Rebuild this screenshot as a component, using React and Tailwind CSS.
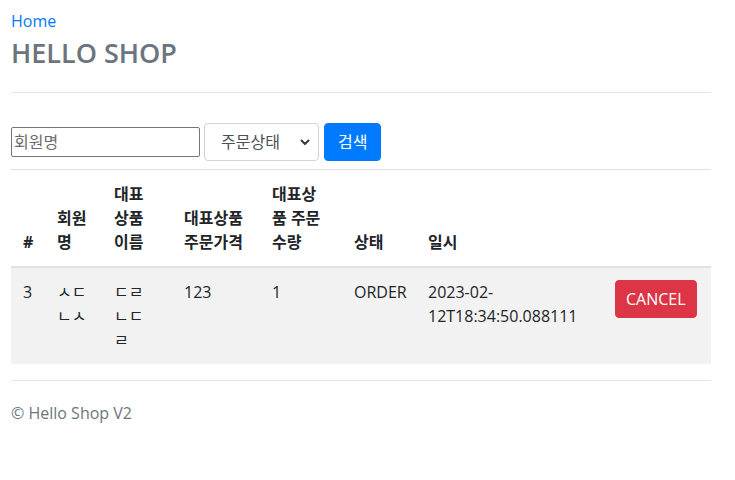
const cols = [34, 57, 70, 88, 82, 74, 187, 108];

const headers = ["#", "회원명", "대표상품이름", "대표상품 주문가격", "대표상품 주문수량", "상태", "일시", ""];

const orders = [
  {
    id: 3,
    member: "ㅅㄷㄴㅅ",
    item: "ㄷㄹㄴㄷㄹ",
    price: 123,
    count: 1,
    status: "ORDER",
    date: "2023-02-12T18:34:50.088111",
  },
];

function Chevron() {
  return (
    <svg width="10" height="8" viewBox="0 0 10 8" className="text-[#343a40]">
      <path d="M1.5 2.5 L5 6 L8.5 2.5" fill="none" stroke="currentColor" strokeWidth="2" strokeLinecap="round" strokeLinejoin="round" />
    </svg>
  );
}

export default function App() {
  return (
    <div
      className="w-[700px] ml-[11px] pt-[9px] text-[16px] leading-6 text-[#212529] bg-white"
      style={{ fontFamily: '"Open Sans", "Noto Sans CJK KR", sans-serif' }}
    >
      <div>
        <a href="#" className="text-[#007bff]">Home</a>
      </div>
      <h3 className="mt-[4px] text-[27px] leading-[1.2] font-semibold text-[#6c757d]">HELLO SHOP</h3>
      <hr className="mt-[23px] border-t border-[#e5e5e5]" />

      <form className="mt-[30px] flex items-center h-[38px]">
        <input
          placeholder="회원명"
          className="w-[189px] h-[30px] px-[2px] border border-[#767676] rounded-[2px] text-[16px] placeholder:text-[#6b6b6b] outline-none"
        />
        <div className="ml-1 w-[115px] h-[38px] flex items-center justify-between pl-[16px] pr-[8px] border border-[#ced4da] rounded bg-white text-[#495057]">
          <span>주문상태</span>
          <Chevron />
        </div>
        <button type="button" className="ml-[5px] h-[38px] px-[13px] rounded bg-[#007bff] border border-[#007bff] text-white">
          검색
        </button>
      </form>

      <table className="mt-[8px] w-[700px] table-fixed border-collapse">
        <colgroup>
          {cols.map((w, i) => (
            <col key={i} style={{ width: w }} />
          ))}
        </colgroup>
        <thead>
          <tr>
            {headers.map((h, i) => (
              <th
                key={i}
                className={`p-3 align-bottom text-left font-bold border-t border-b-2 border-[#dee2e6] break-all ${
                  i === 2 ? "pr-[16px]" : ""
                }`}
              >
                {h}
              </th>
            ))}
          </tr>
        </thead>
        <tbody>
          {orders.map((o) => (
            <tr key={o.id} className="bg-[#f2f2f2]">
              <td className="p-3 align-top">{o.id}</td>
              <td className="p-3 align-top break-all">{o.member}</td>
              <td className="p-3 pr-[16px] align-top break-all">{o.item}</td>
              <td className="p-3 align-top">{o.price}</td>
              <td className="p-3 align-top">{o.count}</td>
              <td className="p-3 align-top">{o.status}</td>
              <td className="p-3 align-top">{o.date}</td>
              <td className="p-3 align-top">
                <button type="button" className="h-[38px] px-[10px] rounded bg-[#dc3545] border border-[#dc3545] text-white">
                  CANCEL
                </button>
              </td>
            </tr>
          ))}
        </tbody>
      </table>

      <hr className="mt-4 border-t border-[#e5e5e5]" />
      <footer className="pt-[20px] text-[#6c757d]">© Hello Shop V2</footer>
    </div>
  );
}
